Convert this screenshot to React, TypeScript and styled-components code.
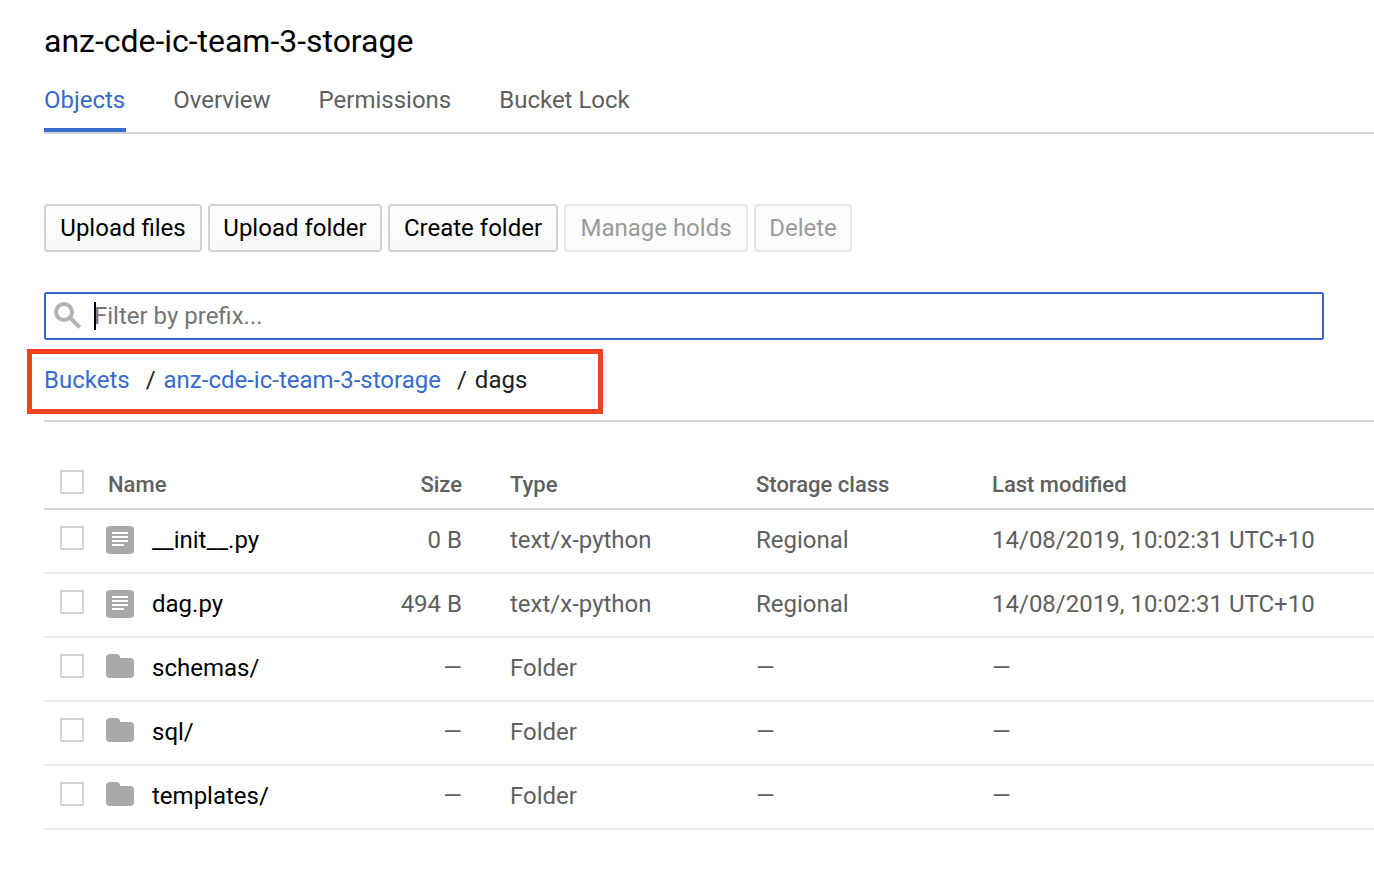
import React from 'react';
import styled, { createGlobalStyle } from 'styled-components';

const GlobalStyle = createGlobalStyle`
  *, *::before, *::after { box-sizing: border-box; }
  body {
    margin: 0;
    overflow: hidden;
    background: #fff;
    color: #000;
    font-family: Roboto, "Liberation Sans", sans-serif;
    font-size: 24px;
    line-height: 32px;
  }
`;

const Page = styled.main`
  height: 894px;
  padding: 21px 0 0 44px;
  overflow: hidden;
`;

const Title = styled.h1`
  margin: 0;
  font-size: 32px;
  line-height: 40px;
  font-weight: 400;
  letter-spacing: -0.02px;
`;

const Tabs = styled.nav`
  display: flex;
  gap: 48px;
  height: 73px;
  border-bottom: 2px solid #d2d2d2;
`;

const Tab = styled.a<{ $active?: boolean }>`
  height: 71px;
  padding-top: 23px;
  margin-right: ${(p) => (p.$active ? '-1px' : 0)};
  padding-right: ${(p) => (p.$active ? '1px' : 0)};
  color: ${(p) => (p.$active ? '#366ad0' : '#5f5f5f')};
  border-bottom: ${(p) => (p.$active ? '4px solid #366ad0' : 'none')};
`;

const Toolbar = styled.div`
  display: flex;
  gap: 6px;
  margin-top: 70px;
`;

const Button = styled.button<{ $width: number }>`
  width: ${(p) => p.$width}px;
  height: 48px;
  padding: 0;
  border: 2px solid #d1d1d1;
  border-radius: 4px;
  background: linear-gradient(#fff, #f8f8f8);
  color: #000;
  font: inherit;
  white-space: nowrap;
  &:disabled {
    border-color: #e6e6e6;
    background: #fcfcfc;
    color: #9a9a9a;
  }
`;

const Filter = styled.div`
  display: flex;
  align-items: center;
  width: 1280px;
  height: 48px;
  margin-top: 40px;
  padding-left: 8px;
  border: 2px solid #366ad0;
  border-radius: 2px;
`;

const SearchIcon = styled.svg`
  width: 27px;
  height: 27px;
  margin-bottom: 1px;
  fill: none;
  stroke: #b3b3b3;
  stroke-width: 4;
`;

const Caret = styled.span`
  width: 2px;
  height: 28px;
  margin: 0 -2px 0 13px;
  background: #000;
`;

const Placeholder = styled.span`
  color: #757575;
`;

const Crumbs = styled.div`
  display: flex;
  width: 576px;
  height: 65px;
  margin: 9px 0 6px -17px;
  padding: 10px 0 0 12px;
  border: 5px solid #f5411f;
  color: #212121;
  white-space: pre;
`;

const CrumbLink = styled.a`
  color: #366ad0;
`;

const Slash = styled.span`
  margin: 0 8px 0 16px;
`;

const Table = styled.section`
  border-top: 2px solid #d2d2d2;
  padding-top: 38px;
  color: #5f5f5f;
`;

const Row = styled.div<{ $head?: boolean }>`
  display: grid;
  grid-template-columns: 62px 236px 120px 246px 236px 1fr;
  height: ${(p) => (p.$head ? 50 : 64)}px;
  padding-top: ${(p) => (p.$head ? 9 : 14)}px;
  border-bottom: 2px solid ${(p) => (p.$head ? '#d2d2d2' : '#ebebeb')};
  font-size: ${(p) => (p.$head ? 22 : 24)}px;
  font-weight: ${(p) => (p.$head ? 500 : 400)};
  white-space: nowrap;
`;

const Checkbox = styled.span<{ $head?: boolean }>`
  width: 24px;
  height: 24px;
  margin: ${(p) => (p.$head ? 1 : 2)}px 0 0 16px;
  border: 2px solid #d2d2d2;
`;

const NameCell = styled.span<{ $head?: boolean }>`
  display: flex;
  gap: 18px;
  padding-left: ${(p) => (p.$head ? 2 : 0)}px;
  color: ${(p) => (p.$head ? 'inherit' : '#000')};
`;

const SizeCell = styled.span`
  text-align: right;
`;

const TypeCell = styled.span`
  margin-left: 48px;
`;

const StorageCell = styled.span`
  margin-left: 48px;
`;

const ModifiedCell = styled.span`
  margin-left: 48px;
`;

const KindIcon = styled.svg`
  width: 28px;
  height: 28px;
  margin-top: 2px;
  fill: #a8a8a8;
`;

const FileIcon = () => (
  <KindIcon viewBox="0 0 28 28">
    <rect width="28" height="28" rx="4" />
    <path d="M6 6h16v2H6zM6 10h16v2H6zM6 14h16v2H6zM6 18h12v2H6z" fill="#fff" />
  </KindIcon>
);

const FolderIcon = () => (
  <KindIcon viewBox="0 0 28 28">
    <path d="M4 0h6q4 0 4 4h10q4 0 4 4v12q0 4-4 4H4q-4 0-4-4V4q0-4 4-4z" />
  </KindIcon>
);

const files = [
  { name: '__init__.py', size: '0 B', type: 'text/x-python', storage: 'Regional', modified: '14/08/2019, 10:02:31 UTC+10' },
  { name: 'dag.py', size: '494 B', type: 'text/x-python', storage: 'Regional', modified: '14/08/2019, 10:02:31 UTC+10' },
  { name: 'schemas/', size: '—', type: 'Folder', storage: '—', modified: '—' },
  { name: 'sql/', size: '—', type: 'Folder', storage: '—', modified: '—' },
  { name: 'templates/', size: '—', type: 'Folder', storage: '—', modified: '—' },
];

export default function App() {
  return (
    <>
      <GlobalStyle />
      <Page>
        <Title>anz-cde-ic-team-3-storage</Title>
        <Tabs>
          <Tab $active>Objects</Tab>
          <Tab>Overview</Tab>
          <Tab>Permissions</Tab>
          <Tab>Bucket Lock</Tab>
        </Tabs>
        <Toolbar>
          <Button $width={158}>Upload files</Button>
          <Button $width={174}>Upload folder</Button>
          <Button $width={170}>Create folder</Button>
          <Button $width={184} disabled>Manage holds</Button>
          <Button $width={98} disabled>Delete</Button>
        </Toolbar>
        <Filter>
          <SearchIcon viewBox="0 0 27 27">
            <circle cx="10" cy="10" r="8" />
            <path d="M15.5 15.2l10.3 10.1" />
          </SearchIcon>
          <Caret />
          <Placeholder>Filter by prefix...</Placeholder>
        </Filter>
        <Crumbs>
          <CrumbLink>Buckets</CrumbLink>
          <Slash>/</Slash>
          <CrumbLink>anz-cde-ic-team-3-storage</CrumbLink>
          <Slash>/</Slash>
          <span>dags</span>
        </Crumbs>
        <Table>
          <Row $head>
            <Checkbox $head />
            <NameCell $head>Name</NameCell>
            <SizeCell>Size</SizeCell>
            <TypeCell>Type</TypeCell>
            <StorageCell>Storage class</StorageCell>
            <ModifiedCell>Last modified</ModifiedCell>
          </Row>
          {files.map((f) => (
            <Row key={f.name}>
              <Checkbox />
              <NameCell>
                {f.type === 'Folder' ? <FolderIcon /> : <FileIcon />}
                {f.name}
              </NameCell>
              <SizeCell>{f.size}</SizeCell>
              <TypeCell>{f.type}</TypeCell>
              <StorageCell>{f.storage}</StorageCell>
              <ModifiedCell>{f.modified}</ModifiedCell>
            </Row>
          ))}
        </Table>
      </Page>
    </>
  );
}
